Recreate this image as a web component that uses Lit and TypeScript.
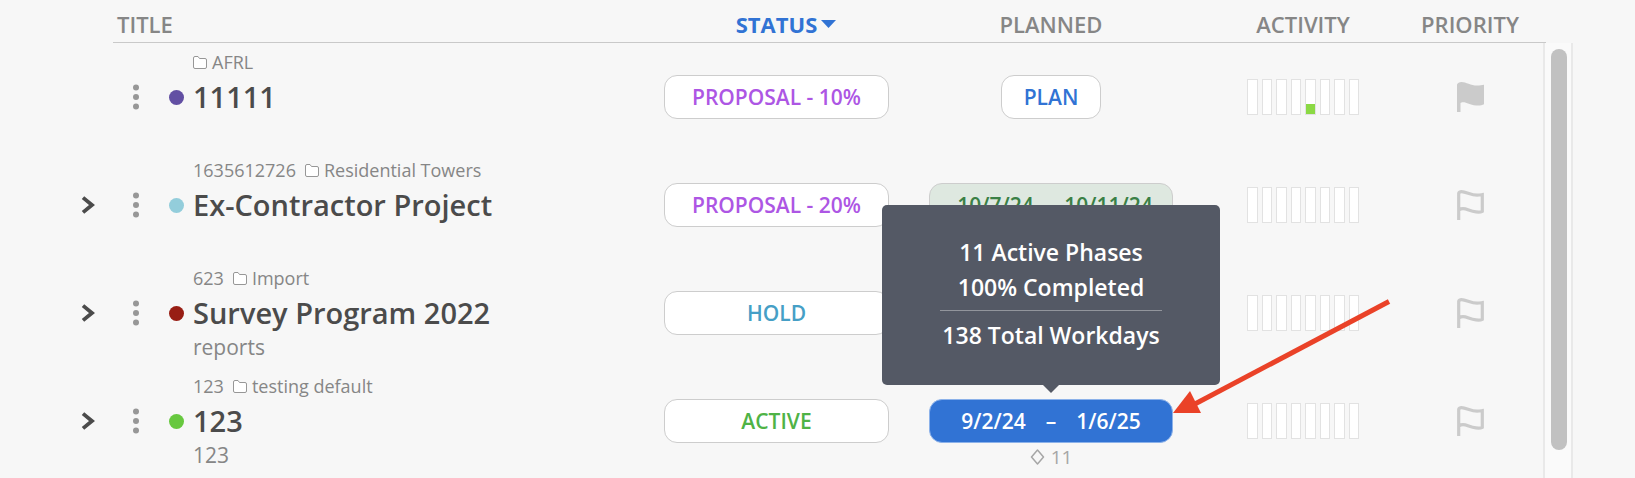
import { LitElement, html, css, svg, nothing } from "lit";
import { customElement, property } from "lit/decorators.js";

interface Project {
  code?: string;
  folder: string;
  name: string;
  note?: string;
  color: string;
  expandable: boolean;
  status: string;
  tone: string;
  start?: string;
  end?: string;
  plan?: "empty" | "done" | "current";
  milestones?: number;
  activity: number[];
  flagged: boolean;
}

const idle = [0, 0, 0, 0, 0, 0, 0, 0];

const projects: Project[] = [
  {
    folder: "AFRL", name: "11111", color: "#624fa3", expandable: false,
    status: "PROPOSAL - 10%", tone: "proposal", plan: "empty",
    activity: [0, 0, 0, 0, 30, 0, 0, 0], flagged: true,
  },
  {
    code: "1635612726", folder: "Residential Towers", name: "Ex-Contractor Project",
    color: "#93cddb", expandable: true, status: "PROPOSAL - 20%", tone: "proposal",
    plan: "done", start: "10/7/24", end: "10/11/24", activity: idle, flagged: false,
  },
  {
    code: "623", folder: "Import", name: "Survey Program 2022", note: "reports",
    color: "#981e14", expandable: true, status: "HOLD", tone: "hold",
    activity: idle, flagged: false,
  },
  {
    code: "123", folder: "testing default", name: "123", note: "123",
    color: "#67c83f", expandable: true, status: "ACTIVE", tone: "active",
    plan: "current", start: "9/2/24", end: "1/6/25", milestones: 11,
    activity: idle, flagged: false,
  },
];

@customElement("activity-bars")
export class ActivityBars extends LitElement {
  @property({ attribute: false }) values: number[] = [];

  static styles = css`
    :host { display: block; width: 112px; }
    .bars { display: flex; gap: 4px; height: 36px; }
    .bar {
      flex: 1;
      display: flex;
      align-items: flex-end;
      box-sizing: border-box;
      border: 1px solid #e2e2e2;
      background: #fff;
    }
    .fill { width: 100%; background: #8bd944; }
  `;

  render() {
    return html`<div class="bars">
      ${this.values.map((v) => html`<div class="bar">
        ${v ? html`<div class="fill" style="height:${v}%"></div>` : nothing}
      </div>`)}
    </div>`;
  }
}

@customElement("priority-flag")
export class PriorityFlag extends LitElement {
  @property({ type: Boolean }) filled = false;

  static styles = css`
    :host { display: block; }
    .flag { display: block; padding: 0; border: 0; background: none; cursor: pointer; }
    .icon { display: block; }
  `;

  render() {
    return html`<button class="flag" aria-label="Priority" aria-pressed=${this.filled}>
      <svg class="icon" width="27" height="30" viewBox="0 0 27 30">
        ${this.filled
          ? svg`<path fill="#cbcbcb" d="M0 2.5Q1 0 4.5 0C9 0 14 3.6 20 3.6C23 3.6 25 3 27 2.8V22.3C25 23.5 22 23.8 19 23.5C13 23 10 20.3 6 20.3C5 20.3 4 20.7 3.5 21V30H0Z"/>`
          : svg`<path fill="none" stroke="#cbcbcb" stroke-width="3.2" d="M1.7 30V3.3Q2.3 1.6 4.5 1.6C9 1.6 14 5.2 20 5.2C22.5 5.2 24 4.9 25.3 4.7V21.3C24 22 22 22.2 19 21.9C13 21.3 10 18.7 6 18.7C4.5 18.7 3 19.2 2 19.9"/>`}
      </svg>
    </button>`;
  }
}

@customElement("phase-tooltip")
export class PhaseTooltip extends LitElement {
  static styles = css`
    :host {
      display: block;
      box-sizing: border-box;
      width: 338px;
      padding: 30px 58px 32px;
      border-radius: 5px;
      background: #545965;
      color: #fff;
      font-size: 23px;
      font-weight: 600;
      line-height: 35px;
      text-align: center;
      white-space: nowrap;
    }
    .line { margin: 0; }
    .rule { margin: 5px 0 7px; border: 0; border-top: 1px solid #92959c; }
    .tip {
      position: absolute;
      top: 100%;
      left: 50%;
      margin-left: -8px;
      border: 8px solid transparent;
      border-top-color: #545965;
      border-bottom: 0;
    }
  `;

  render() {
    return html`
      <p class="line">11 Active Phases</p>
      <p class="line">100% Completed</p>
      <hr class="rule" />
      <p class="line">138 Total Workdays</p>
      <span class="tip"></span>`;
  }
}

@customElement("app-root")
export class AppRoot extends LitElement {
  static styles = css`
    :host {
      display: block;
      min-height: 100vh;
      background: #f7f7f7;
      color: #868686;
      font-family: "Open Sans", "Noto Sans", sans-serif;
    }
    .page {
      display: flex;
      box-sizing: border-box;
      min-height: 100vh;
      padding-right: 62px;
    }
    .projects {
      flex: 1;
      align-self: flex-start;
      min-width: 0;
      table-layout: fixed;
      border-collapse: separate;
      border-spacing: 0;
    }
    .col-expand { width: 113px; }
    .col-status { width: 233px; }
    .col-planned { width: 316px; }
    .col-activity { width: 188px; }
    .col-priority { width: 146px; }

    .head {
      box-sizing: border-box;
      height: 43px;
      padding: 9px 0 0;
      border-bottom: 1px solid #c9c9c9;
      font-size: 22px;
      font-weight: 600;
      line-height: 30px;
      text-align: center;
      vertical-align: top;
    }
    .head.blank { border-bottom-color: transparent; }
    .head.title { padding-left: 4px; text-align: left; }
    .sort {
      display: inline-flex;
      align-items: center;
      gap: 4px;
      padding: 0;
      border: 0;
      background: none;
      color: inherit;
      font: inherit;
      cursor: pointer;
    }
    .sort.on { color: #3173d4; font-weight: 700; }
    .caret { width: 15px; height: 8px; margin-right: -19px; }

    .cell { height: 108px; padding: 0; vertical-align: top; }
    .middle {
      display: flex;
      align-items: center;
      justify-content: center;
      height: 108px;
    }
    .middle.end { justify-content: flex-end; padding-right: 18px; }
    .icon-button { display: block; padding: 0; border: 0; background: none; cursor: pointer; }
    .icon { display: block; }

    .entry {
      display: grid;
      grid-template-columns: 6px 15px minmax(0, 1fr);
      grid-template-rows: 34px 36px 32px;
      column-gap: 30px;
      align-items: center;
      padding: 2px 0 4px 20px;
      white-space: nowrap;
    }
    .entry > * { grid-row: 2; }
    .entry > .text { grid-row: 1 / 4; grid-column: 3; align-self: start; margin-left: -21px; }
    .meta { display: flex; align-items: center; height: 34px; font-size: 18px; line-height: 34px; }
    .code { margin-right: 9px; }
    .folder { margin-right: 5px; }
    .name {
      display: block;
      color: #4b4b4b;
      font-size: 29px;
      font-weight: 600;
      line-height: 36px;
      text-decoration: none;
    }
    .note { font-size: 21px; line-height: 32px; }
    .dot { width: 15px; height: 15px; border-radius: 50%; }

    .pill {
      display: flex;
      align-items: center;
      justify-content: center;
      gap: 20px;
      box-sizing: border-box;
      height: 44px;
      padding: 0 20px;
      border: 1px solid #cdcdcd;
      border-radius: 13px;
      background: #fff;
      font-family: inherit;
      font-size: 21px;
      font-weight: 600;
      white-space: nowrap;
      cursor: pointer;
    }
    .status { width: 225px; }
    .proposal { color: #ad56e4; }
    .hold { color: #469fc6; }
    .active { color: #4fb346; }
    .empty { width: 100px; color: #3173d4; }
    .done {
      gap: 10px;
      width: 244px;
      padding: 0 18px 0 26px;
      background: #dee8e0;
      color: #3a8046;
    }
    .current { width: 244px; border-color: #8cb2ea; background: #3173d4; color: #fff; }

    .planned {
      display: flex;
      flex-direction: column;
      align-items: center;
      padding-top: 32px;
    }
    .anchor { position: relative; }
    .tooltip {
      position: absolute;
      bottom: calc(100% + 14px);
      left: 50%;
      z-index: 1;
      margin-left: -169px;
    }
    .pointer { position: absolute; bottom: 24px; left: 100%; z-index: 2; pointer-events: none; }
    .milestones {
      display: flex;
      align-items: center;
      gap: 6px;
      color: #a6a6a6;
      font-size: 19px;
      line-height: 28px;
    }

    .scroll { display: flex; flex-direction: column; width: 30px; }
    .corner { box-sizing: border-box; width: 3px; height: 43px; border-bottom: 1px solid #c9c9c9; }
    .track {
      flex: 1;
      box-sizing: border-box;
      padding: 6px 4px 28px 6px;
      border: solid #e9e9e9;
      border-width: 0 2px;
      background: #fafafa;
      display: flex;
    }
    .thumb { flex: 1; border-radius: 8px; background: #c1c1c1; }
  `;

  private renderPlan(p: Project) {
    const label = p.start
      ? html`<span>${p.start}</span><span>–</span><span>${p.end}</span>`
      : "PLAN";
    return html`<div class="planned">
      <div class="anchor">
        <button class="pill ${p.plan}">${label}</button>
        ${p.plan === "current"
          ? html`<phase-tooltip class="tooltip" role="tooltip"></phase-tooltip>
              <svg class="pointer" width="220" height="120" viewBox="0 0 220 120" aria-hidden="true">
                <path d="M216 2.5L20 106" stroke="#ea4228" stroke-width="5" fill="none"/>
                <path d="M0 114L17 92L28 114Z" fill="#ea4228"/>
              </svg>`
          : nothing}
      </div>
      ${p.milestones
        ? html`<div class="milestones">
            <svg class="icon" width="15" height="16" viewBox="0 0 15 16">
              <path d="M7.5 1L13.5 8L7.5 15L1.5 8Z" fill="none" stroke="#a6a6a6" stroke-width="1.5" stroke-linejoin="round"/>
            </svg>
            <span>${p.milestones}</span>
          </div>`
        : nothing}
    </div>`;
  }

  private renderRow(p: Project) {
    return html`<tr>
      <td class="cell">
        <div class="middle end">
          ${p.expandable
            ? html`<button class="icon-button" aria-label="Expand ${p.name}">
                <svg class="icon" width="14" height="18" viewBox="0 0 14 18">
                  <path d="M2 1.6L11 9L2 16.4" fill="none" stroke="#4b4b4b" stroke-width="3.8"/>
                </svg>
              </button>`
            : nothing}
        </div>
      </td>
      <td class="cell">
        <div class="entry">
          <button class="icon-button" aria-label="Menu for ${p.name}">
            <svg class="icon" width="6" height="26" viewBox="0 0 6 26" fill="#979797">
              <circle cx="3" cy="3.5" r="3"/><circle cx="3" cy="13" r="3"/><circle cx="3" cy="22.5" r="3"/>
            </svg>
          </button>
          <span class="dot" style="background:${p.color}"></span>
          <div class="text">
            <div class="meta">
              ${p.code ? html`<span class="code">${p.code}</span>` : nothing}
              <svg class="icon folder" width="14" height="13" viewBox="0 0 14 13">
                <path d="M.5 2Q.5 .5 2 .5H5L6.5 2.5H12Q13.5 2.5 13.5 4V11Q13.5 12.5 12 12.5H2Q.5 12.5 .5 11Z" fill="#fff" stroke="#979797"/>
              </svg>
              <span>${p.folder}</span>
            </div>
            <a class="name" href="#">${p.name}</a>
            ${p.note ? html`<div class="note">${p.note}</div>` : nothing}
          </div>
        </div>
      </td>
      <td class="cell"><div class="middle"><button class="pill status ${p.tone}">${p.status}</button></div></td>
      <td class="cell">${p.plan ? this.renderPlan(p) : nothing}</td>
      <td class="cell"><div class="middle"><activity-bars .values=${p.activity}></activity-bars></div></td>
      <td class="cell"><div class="middle"><priority-flag ?filled=${p.flagged}></priority-flag></div></td>
    </tr>`;
  }

  render() {
    return html`<div class="page">
      <table class="projects">
        <colgroup>
          <col class="col-expand" /><col /><col class="col-status" />
          <col class="col-planned" /><col class="col-activity" /><col class="col-priority" />
        </colgroup>
        <thead>
          <tr>
            <td class="head blank"></td>
            <th class="head title" scope="col"><button class="sort">TITLE</button></th>
            <th class="head" scope="col" aria-sort="descending">
              <button class="sort on">STATUS<svg class="caret" viewBox="0 0 15 8"><path d="M0 0H15L7.5 8Z" fill="#3173d4"/></svg></button>
            </th>
            <th class="head" scope="col"><button class="sort">PLANNED</button></th>
            <th class="head" scope="col"><button class="sort">ACTIVITY</button></th>
            <th class="head" scope="col"><button class="sort">PRIORITY</button></th>
          </tr>
        </thead>
        <tbody>${projects.map((p) => this.renderRow(p))}</tbody>
      </table>
      <div class="scroll">
        <div class="corner"></div>
        <div class="track"><div class="thumb"></div></div>
      </div>
    </div>`;
  }
}
